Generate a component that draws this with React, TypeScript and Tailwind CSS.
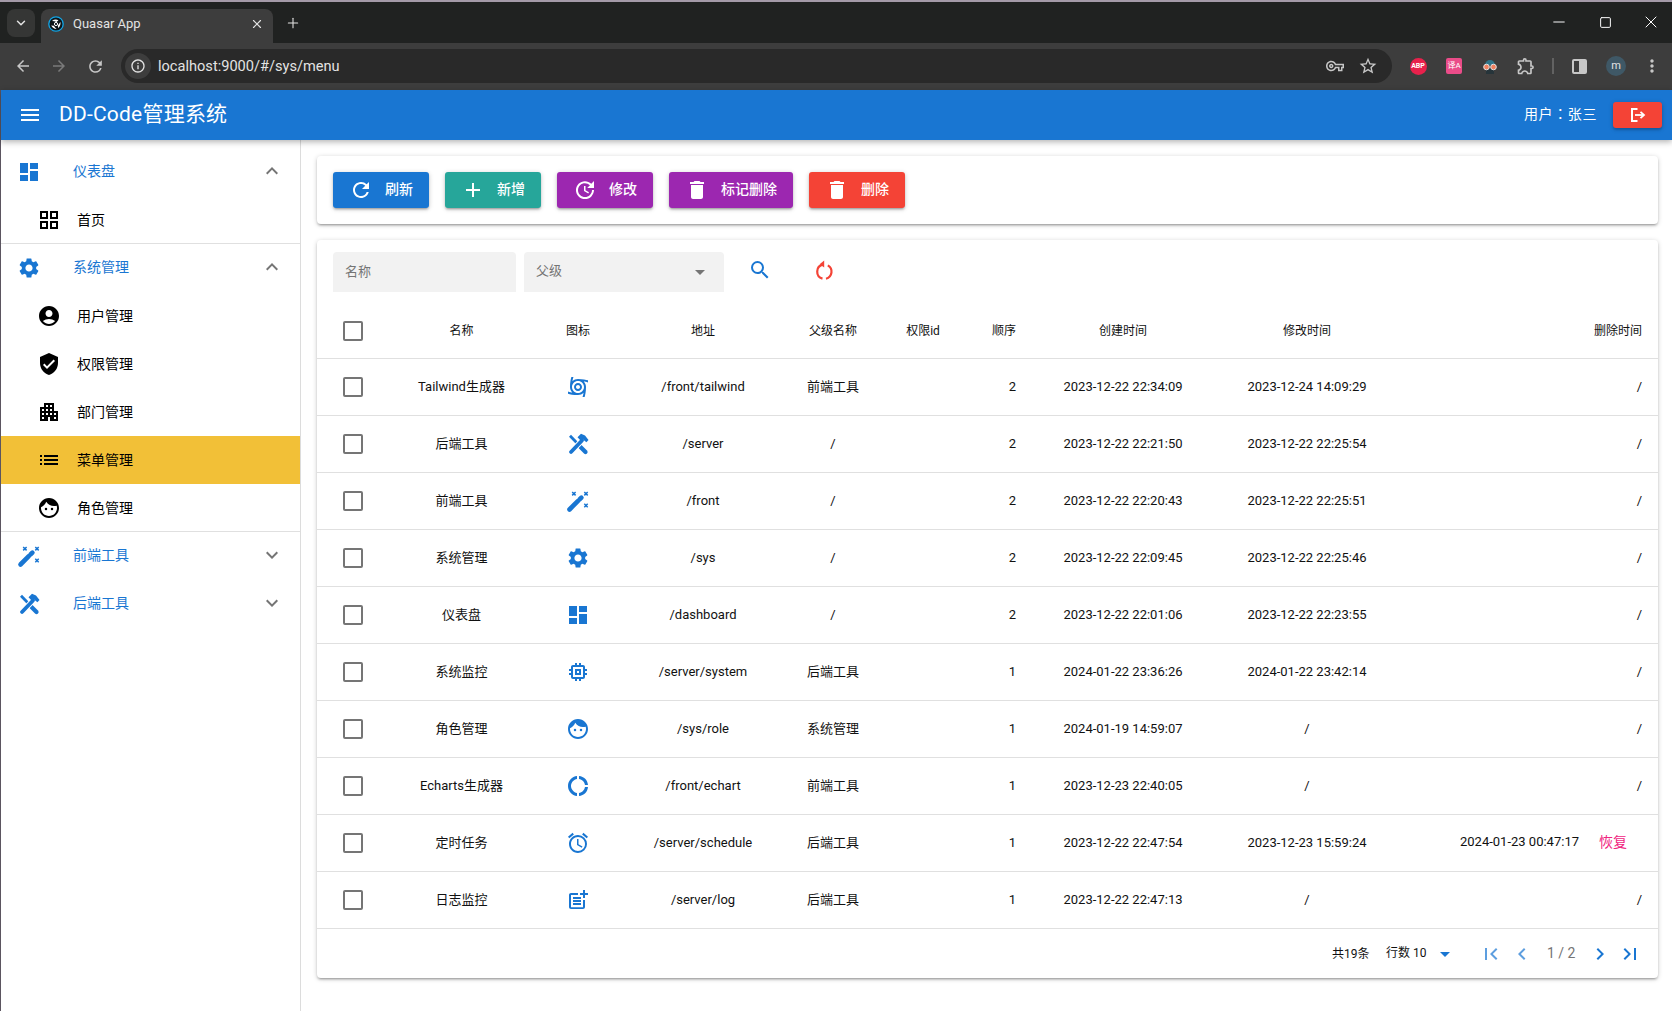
import React from 'react';
import {
  MdAccountCircle,
  MdAdd,
  MdAlarm,
  MdApartment,
  MdArrowBack,
  MdArrowDropDown,
  MdArrowForward,
  MdChevronLeft,
  MdChevronRight,
  MdCyclone,
  MdDashboard,
  MdDelete,
  MdDonutLarge,
  MdExpandLess,
  MdExpandMore,
  MdFace,
  MdFirstPage,
  MdInfoOutline,
  MdLastPage,
  MdList,
  MdMemory,
  MdMenu,
  MdMoreVert,
  MdOutlineExtension,
  MdOutlineGridView,
  MdOutlineVpnKey,
  MdPostAdd,
  MdRefresh,
  MdSearch,
  MdSettings,
  MdStarBorder,
  MdUpdate,
  MdVerifiedUser,
} from 'react-icons/md';
import { Minus, Plus, Square, X, ChevronDown } from 'lucide-react';

// crossed hammer and screwdriver
function ToolsIcon({ size = 24, className = '' }: { size?: number; className?: string }) {
  return (
    <svg width={size} height={size} viewBox="0 0 24 24" className={className} fill="none" stroke="currentColor">
      <path d="M19.5 20 L13.5 14" strokeWidth="4.2" strokeLinecap="round" />
      <path d="M4 3.8 L12 12" strokeWidth="2.8" />
      <path d="M5 20 L16 8.5" stroke="white" strokeWidth="5.6" />
      <path d="M5 20 L16 8.5" strokeWidth="3.8" strokeLinecap="round" />
      <path d="M11.5 5.2 L15 1.8 L19 3.5 L22.5 8 L20.4 10.2 L17 7.6 L15 9 Z" fill="currentColor" stroke="none" />
    </svg>
  );
}

function WandIcon({ size = 24, className = '' }: { size?: number; className?: string }) {
  return (
    <svg width={size} height={size} viewBox="0 0 24 24" className={className} fill="none" stroke="currentColor">
      <path d="M3.5 20.5 L11.8 12.2" strokeWidth="4.6" strokeLinecap="round" />
      <path d="M13.6 10.4 L15.4 8.6" strokeWidth="4.6" strokeLinecap="round" />
      <path d="M6.2 3 L9.6 6.4 M9.6 3 L6.2 6.4" strokeWidth="1.5" />
      <path d="M18.3 3 L21.7 6.4 M21.7 3 L18.3 6.4" strokeWidth="1.5" />
      <path d="M18.3 14.8 L21.7 18.2 M21.7 14.8 L18.3 18.2" strokeWidth="1.5" />
    </svg>
  );
}

function ResetIcon({ size = 24, className = '' }: { size?: number; className?: string }) {
  return (
    <svg width={size} height={size} viewBox="0 0 24 24" className={className} fill="none" stroke="currentColor" strokeWidth="2.2">
      <path d="M11 6.6 A7.2 7.2 0 0 0 10.5 20.6" />
      <path d="M15.8 7.4 A7.2 7.2 0 0 1 14 20.7" />
      <path d="M12.2 2.6 L12.2 9.6 L7.6 6.2 Z" fill="currentColor" stroke="none" />
    </svg>
  );
}

function LogoutIcon() {
  return (
    <svg width="18" height="18" viewBox="0 0 18 18" fill="none" stroke="currentColor">
      <path d="M8.5 3 H3 V15 H8.5" strokeWidth="2" />
      <path d="M6 9 H15" strokeWidth="1.8" />
      <path d="M11.5 5.8 L15 9 L11.5 12.2" strokeWidth="1.8" />
    </svg>
  );
}

function QuasarLogo() {
  return (
    <svg width="16" height="16" viewBox="0 0 16 16" fill="none">
      <circle cx="8" cy="8" r="7.2" fill="#0c1418" stroke="#12a5e6" strokeWidth="1.3" />
      <circle cx="8" cy="8" r="1.6" fill="none" stroke="#ffffff" strokeWidth="1" />
      <path d="M4 5 Q7 2.6 10.5 4.2 L8.5 6 Q6.5 5 4 5 Z" fill="#ffffff" />
      <path d="M12.4 6 Q13 9.6 10.2 12 L9.8 9.4 Q11.2 8 12.4 6 Z" fill="#ffffff" />
      <path d="M8.6 13 Q5 13 3.2 9.6 L5.8 9.8 Q7 11.6 8.6 13 Z" fill="#ffffff" />
    </svg>
  );
}

const buttons = [
  { label: '刷新', icon: MdRefresh, color: 'bg-[#1976d2]', width: 'w-[96px]' },
  { label: '新增', icon: MdAdd, color: 'bg-[#26a69a]', width: 'w-[96px]' },
  { label: '修改', icon: MdUpdate, color: 'bg-[#9c27b0]', width: 'w-[96px]' },
  { label: '标记删除', icon: MdDelete, color: 'bg-[#9c27b0]', width: 'w-[124px]' },
  { label: '删除', icon: MdDelete, color: 'bg-[#f44336]', width: 'w-[96px]' },
];

const rows = [
  { name: 'Tailwind生成器', icon: MdCyclone, path: '/front/tailwind', parent: '前端工具', order: 2, created: '2023-12-22 22:34:09', updated: '2023-12-24 14:09:29' },
  { name: '后端工具', icon: ToolsIcon, path: '/server', parent: '/', order: 2, created: '2023-12-22 22:21:50', updated: '2023-12-22 22:25:54' },
  { name: '前端工具', icon: WandIcon, path: '/front', parent: '/', order: 2, created: '2023-12-22 22:20:43', updated: '2023-12-22 22:25:51' },
  { name: '系统管理', icon: MdSettings, path: '/sys', parent: '/', order: 2, created: '2023-12-22 22:09:45', updated: '2023-12-22 22:25:46' },
  { name: '仪表盘', icon: MdDashboard, path: '/dashboard', parent: '/', order: 2, created: '2023-12-22 22:01:06', updated: '2023-12-22 22:23:55' },
  { name: '系统监控', icon: MdMemory, path: '/server/system', parent: '后端工具', order: 1, created: '2024-01-22 23:36:26', updated: '2024-01-22 23:42:14' },
  { name: '角色管理', icon: MdFace, path: '/sys/role', parent: '系统管理', order: 1, created: '2024-01-19 14:59:07', updated: '/' },
  { name: 'Echarts生成器', icon: MdDonutLarge, path: '/front/echart', parent: '前端工具', order: 1, created: '2023-12-23 22:40:05', updated: '/' },
  { name: '定时任务', icon: MdAlarm, path: '/server/schedule', parent: '后端工具', order: 1, created: '2023-12-22 22:47:54', updated: '2023-12-23 15:59:24', deleted: '2024-01-23 00:47:17' },
  { name: '日志监控', icon: MdPostAdd, path: '/server/log', parent: '后端工具', order: 1, created: '2023-12-22 22:47:13', updated: '/' },
];

function Checkbox() {
  return <div className="mx-auto w-5 h-5 rounded-[2px] border-2 border-[#757575]"></div>;
}

function ChromeBar() {
  return (
    <div className="shrink-0">
      <div className="h-[2px] bg-[#a49aa8]"></div>
      <div className="h-[41px] bg-[#202221] flex pt-[7px] pl-[7px] text-[#e3e3e3]">
        <div className="w-[28px] h-[28px] rounded-lg bg-[#353635] flex items-center justify-center">
          <ChevronDown size={14} strokeWidth={2.5} />
        </div>
        <div className="ml-[6px] w-[232px] h-[34px] rounded-t-lg bg-[#3d3d3d] flex items-center pl-[7px] pr-[9px] pb-[4px]">
          <QuasarLogo />
          <span className="ml-[9px] text-[13px] flex-1">Quasar App</span>
          <X size={14} strokeWidth={2} />
        </div>
        <div className="ml-[12px] h-[28px] flex items-center">
          <Plus size={16} strokeWidth={1.6} />
        </div>
        <div className="ml-auto -mr-[2px] flex h-[26px] items-center text-white">
          <div className="w-[46px] flex justify-center"><Minus size={18} strokeWidth={1.3} /></div>
          <div className="w-[46px] flex justify-center"><Square size={13} strokeWidth={1.8} /></div>
          <div className="w-[46px] flex justify-center"><X size={20} strokeWidth={1.2} /></div>
        </div>
      </div>
      <div className="h-[47px] bg-[#3d3d3d] flex items-center pl-[5px] pb-[1px] text-[#c7c7c7]">
        <div className="w-[36px] flex justify-center"><MdArrowBack size={18} /></div>
        <div className="w-[36px] flex justify-center text-[#7a7a7a]"><MdArrowForward size={18} /></div>
        <div className="w-[36px] flex justify-center"><MdRefresh size={19} /></div>
        <div className="ml-[8px] w-[1271px] h-[34px] rounded-full bg-[#292929] flex items-center pl-[4px] pr-[14px]">
          <div className="w-[26px] h-[26px] rounded-full bg-[#3d3d3d] flex items-center justify-center">
            <MdInfoOutline size={16} className="text-[#e3e3e3]" />
          </div>
          <span className="ml-[7px] mt-[2px] text-[14.6px] text-[#e3e3e3] flex-1">localhost:9000/#/sys/menu</span>
          <MdOutlineVpnKey size={18} className="mr-[14px]" />
          <MdStarBorder size={20} />
        </div>
        <div className="ml-[8px] w-[36px] flex justify-center">
          <div className="w-[17px] h-[17px] rounded-full bg-[#e8214c] text-white text-[7px] font-bold flex items-center justify-center">ABP</div>
        </div>
        <div className="w-[36px] flex justify-center">
          <div className="w-[16px] h-[16px] rounded-[2px] bg-[#ea4c89] text-white text-[8px] leading-[8px] flex items-center justify-center">译A</div>
        </div>
        <div className="w-[36px] flex justify-center">
          <svg width="18" height="18" viewBox="0 0 18 18">
            <path d="M4 8a5 5 0 0 1 10 0z" fill="#2f7488" />
            <rect x="5" y="11" width="8" height="6" fill="#26343a" />
            <circle cx="5.5" cy="10" r="2.8" fill="#f0805f" stroke="#e3e3e3" />
            <circle cx="12.5" cy="10" r="2.8" fill="#f0805f" stroke="#e3e3e3" />
          </svg>
        </div>
        <div className="w-[36px] flex justify-center"><MdOutlineExtension size={20} /></div>
        <div className="ml-[8px] w-[2px] h-[16px] bg-[#626262]"></div>
        <div className="ml-[7px] w-[36px] flex justify-center">
          <div className="w-[15px] h-[15px] rounded-[2px] border-2 border-[#c7c7c7] flex justify-end">
            <div className="w-[6px] bg-[#c7c7c7]"></div>
          </div>
        </div>
        <div className="ml-[3px] w-[32px] flex justify-center">
          <div className="w-[20px] h-[20px] rounded-full bg-[#3f5866] text-[#e3e3e3] text-[11px] flex items-center justify-center">m</div>
        </div>
        <div className="ml-[2px] w-[36px] flex justify-center"><MdMoreVert size={20} /></div>
      </div>
    </div>
  );
}

function AppHeader() {
  return (
    <div className="relative z-10 shrink-0 h-[50px] bg-[#1976d2] text-white flex items-center pl-[17px] pr-[10px] shadow-[0_2px_6px_rgba(0,0,0,0.3)]">
      <MdMenu size={24} />
      <div className="ml-[17px] text-[21px] tracking-[0.01em] flex-1">DD-Code管理系统</div>
      <div className="-mt-[2px] text-[14px] tracking-[0.6px] [text-spacing-trim:space-all]">
        用户<span className="font-['Noto_Sans_CJK_TC']">：</span>张三
      </div>
      <button className="ml-[16px] w-[49px] h-[26px] rounded-[3px] bg-[#f44336] flex items-center justify-center shadow-[0_1px_5px_rgba(0,0,0,0.2),0_2px_2px_rgba(0,0,0,0.14)]">
        <LogoutIcon />
      </button>
    </div>
  );
}

function GroupHead({ icon: Icon, label, open }: any) {
  const Chevron = open ? MdExpandLess : MdExpandMore;
  return (
    <div className="h-12 flex items-center pl-4 pr-4 text-[#1976d2]">
      <Icon size={24} />
      <span className="ml-[32px] -mt-[2px] text-[14px] flex-1">{label}</span>
      <Chevron size={24} className="-mt-[2px] text-[#757575]" />
    </div>
  );
}

function SubItem({ icon: Icon, label, active }: any) {
  return (
    <div className={`h-12 flex items-center pl-[36px] text-black ${active ? 'bg-[#f2c037]' : ''}`}>
      <Icon size={24} />
      <span className="ml-[16px] text-[14px]">{label}</span>
    </div>
  );
}

function Sidebar() {
  return (
    <aside className="shrink-0 w-[300px] border-r border-[#dcdcdc] pt-2">
      <div className="border-b border-[#e0e0e0] h-[96px]">
        <GroupHead icon={MdDashboard} label="仪表盘" open />
        <SubItem icon={MdOutlineGridView} label="首页" />
      </div>
      <div className="border-b border-[#e0e0e0] h-[288px]">
        <GroupHead icon={MdSettings} label="系统管理" open />
        <SubItem icon={MdAccountCircle} label="用户管理" />
        <SubItem icon={MdVerifiedUser} label="权限管理" />
        <SubItem icon={MdApartment} label="部门管理" />
        <SubItem icon={MdList} label="菜单管理" active />
        <SubItem icon={MdFace} label="角色管理" />
      </div>
      <GroupHead icon={WandIcon} label="前端工具" />
      <GroupHead icon={ToolsIcon} label="后端工具" />
    </aside>
  );
}

function Toolbar() {
  return (
    <div className="h-[68px] rounded bg-white p-4 flex gap-4 shadow-[0_1px_5px_rgba(0,0,0,0.2),0_2px_2px_rgba(0,0,0,0.14),0_3px_1px_-2px_rgba(0,0,0,0.12)]">
      {buttons.map((b) => {
        const Icon = b.icon;
        return (
          <button
            key={b.label}
            className={`${b.width} ${b.color} h-9 rounded-[3px] text-white text-[14px] font-medium flex items-center justify-center gap-[12px] shadow-[0_1px_5px_rgba(0,0,0,0.2),0_2px_2px_rgba(0,0,0,0.14),0_3px_1px_-2px_rgba(0,0,0,0.12)]`}
          >
            <Icon size={24} />
            <span className="-mt-[2px]">{b.label}</span>
          </button>
        );
      })}
    </div>
  );
}

function DataTable() {
  const th = 'font-normal text-[12px] text-center px-0 border-b border-[#e0e0e0]';
  const td = 'border-b border-[#e0e0e0] text-center';
  return (
    <table className="w-[1341px] table-fixed border-separate border-spacing-0 text-[13px]">
      <colgroup>
        <col className="w-[72px]" />
        <col className="w-[145px]" />
        <col className="w-[88px]" />
        <col className="w-[162px]" />
        <col className="w-[98px]" />
        <col className="w-[82px]" />
        <col className="w-[68px]" />
        <col className="w-[182px]" />
        <col className="w-[186px]" />
        <col className="w-[258px]" />
      </colgroup>
      <thead>
        <tr className="h-[55px]">
          <th className={th}><Checkbox /></th>
          <th className={th}>名称</th>
          <th className={th}>图标</th>
          <th className={th}>地址</th>
          <th className={th}>父级名称</th>
          <th className={th}>权限id</th>
          <th className={`${th} !text-right pr-4`}>顺序</th>
          <th className={th}>创建时间</th>
          <th className={th}>修改时间</th>
          <th className={`${th} !text-right pr-4`}>删除时间</th>
        </tr>
      </thead>
      <tbody>
        {rows.map((r) => {
          const Icon = r.icon;
          return (
            <tr key={r.name} className="h-[57px]">
              <td className={td}><Checkbox /></td>
              <td className={td}>{r.name}</td>
              <td className={`${td} text-[#1976d2]`}>
                <div className="flex justify-center"><Icon size={24} /></div>
              </td>
              <td className={td}>{r.path}</td>
              <td className={td}>{r.parent}</td>
              <td className={td}></td>
              <td className={`${td} !text-right pr-4`}>{r.order}</td>
              <td className={td}>{r.created}</td>
              <td className={td}>{r.updated}</td>
              <td className={`${td} !text-right pr-4`}>
                {r.deleted ? (
                  <div className="-mt-[2px] flex justify-end items-center pr-[15px]">
                    <span>{r.deleted}</span>
                    <span className="ml-[20px] text-[14px] text-[#f0247f]">恢复</span>
                  </div>
                ) : (
                  '/'
                )}
              </td>
            </tr>
          );
        })}
      </tbody>
    </table>
  );
}

function Pagination() {
  return (
    <div className="h-[49px] flex items-center text-[12px] pl-[1015px]">
      <span className="w-[54px]">共19条</span>
      <span className="w-[48px] -mt-[2px]">行数 10</span>
      <MdArrowDropDown size={24} className="text-[#1976d2] -ml-[1px]" />
      <MdFirstPage size={24} className="ml-[22px] text-[#1976d2] opacity-70" />
      <MdChevronLeft size={24} className="ml-[7px] text-[#1976d2] opacity-70" />
      <span className="ml-[13px] w-[29px] text-[#757575] text-[14px] whitespace-nowrap">1 / 2</span>
      <MdChevronRight size={24} className="ml-[12px] text-[#1976d2]" />
      <MdLastPage size={24} className="ml-[6px] text-[#1976d2]" />
    </div>
  );
}

function TableCard() {
  return (
    <div className="h-[738px] rounded bg-white shadow-[0_1px_5px_rgba(0,0,0,0.2),0_2px_2px_rgba(0,0,0,0.14),0_3px_1px_-2px_rgba(0,0,0,0.12)]">
      <div className="h-[64px] pt-3 pl-4 flex">
        <input
          placeholder="名称"
          className="w-[183px] h-10 rounded-t bg-[#f2f2f2] px-3 pb-[2px] text-[13px] outline-none placeholder:text-[#757575]"
        />
        <div className="ml-2 w-[200px] h-10 rounded-t bg-[#f2f2f2] pl-3 pr-[12px] flex items-center text-[13px] text-[#757575]">
          <span className="flex-1 -mt-[2px]">父级</span>
          <MdArrowDropDown size={24} />
        </div>
        <div className="ml-[24px] h-9 flex items-center text-[#1976d2]"><MdSearch size={24} /></div>
        <div className="ml-[40px] h-9 flex items-center text-[#f44336]"><ResetIcon size={24} /></div>
      </div>
      <DataTable />
      <Pagination />
    </div>
  );
}

export default function App() {
  return (
    <div className="h-[1011px] w-[1672px] overflow-hidden flex flex-col bg-white text-[#111] font-[Roboto,'Noto_Sans_CJK_SC',sans-serif]">
      <ChromeBar />
      <div className="flex-1 flex flex-col border-l border-[#5b5560] min-h-0">
        <AppHeader />
        <div className="flex-1 flex min-h-0">
          <Sidebar />
          <main className="flex-1 pl-4 pr-[14px] pt-4 flex flex-col gap-4">
            <Toolbar />
            <TableCard />
          </main>
        </div>
      </div>
    </div>
  );
}
